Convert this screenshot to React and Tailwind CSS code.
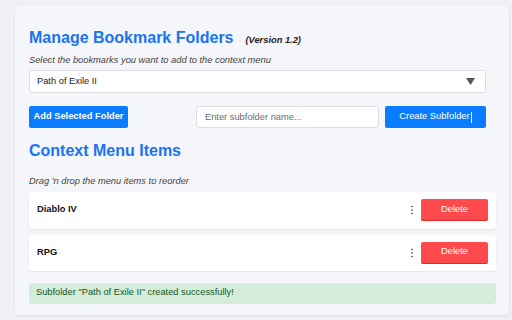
import React, { useState } from 'react'

function Kebab() {
  return (
    <svg width="2" height="10" viewBox="0 0 2 10" className="text-[#333]">
      <circle cx="1" cy="1.5" r="0.8" fill="currentColor" />
      <circle cx="1" cy="5" r="0.8" fill="currentColor" />
      <circle cx="1" cy="8.5" r="0.8" fill="currentColor" />
    </svg>
  )
}

function MenuItem({ name }) {
  return (
    <div className="flex h-[36.5px] items-center rounded-[3px] bg-white pl-[8px] pr-[8px] shadow-[0_1px_2px_rgba(0,0,0,0.08)]">
      <span className="flex-1 text-[9.3px] font-bold text-[#111]">{name}</span>
      <Kebab />
      <button className="ml-[8px] h-[22px] w-[67px] rounded-[2px] border-b border-[#e02a2a] bg-[#ff4a4d] text-[9.3px] text-white">
        Delete
      </button>
    </div>
  )
}

export default function App() {
  const [folder, setFolder] = useState('Path of Exile II')
  const [subfolder, setSubfolder] = useState('')
  const items = ['Diablo IV', 'RPG']

  return (
    <div
      className="h-[320px] w-[512px] overflow-hidden bg-[#eef0f4] pt-[5px] pl-[15px]"
      style={{ fontFamily: '"Liberation Sans", Arial, sans-serif' }}
    >
      <div className="h-[310px] w-[494px] rounded-[5px] bg-[#f5f6fa] pt-[25px] pl-[14px] shadow-[0_1px_3px_rgba(0,0,0,0.08)]">
        <div className="flex h-[16px] items-baseline">
          <h1 className="text-[16px] leading-[16px] font-bold text-[#1a73f0]">Manage Bookmark Folders</h1>
          <span className="ml-[12px] text-[9.3px] leading-[10px] font-bold italic text-[#222]">(Version 1.2)</span>
        </div>
        <p className="mt-[8px] text-[9.3px] leading-[12px] italic text-[#444]">
          Select the bookmarks you want to add to the context menu
        </p>

        <div className="relative mt-[4px] w-[457px]">
          <select
            value={folder}
            onChange={(e) => setFolder(e.target.value)}
            className="block h-[23px] w-full appearance-none rounded-[3px] border border-[#dcdde2] bg-white pl-[7px] text-[9.3px] text-[#222] outline-none"
          >
            <option>Path of Exile II</option>
            <option>Diablo IV</option>
            <option>RPG</option>
          </select>
          <svg
            width="9"
            height="7"
            viewBox="0 0 9 7"
            className="pointer-events-none absolute top-[8px] right-[11px]"
          >
            <polygon points="0,0 9,0 4.5,7" fill="#555" />
          </svg>
        </div>

        <div className="mt-[13px] flex w-[457px] items-center">
          <button className="h-[22px] w-[99px] rounded-[2px] bg-[#0a7cff] text-[9.3px] font-bold text-white">
            Add Selected Folder
          </button>
          <input
            type="text"
            value={subfolder}
            onChange={(e) => setSubfolder(e.target.value)}
            placeholder="Enter subfolder name..."
            className="ml-[68px] h-[22px] w-[183px] rounded-[3px] border border-[#dcdde2] bg-white pl-[8px] text-[9.3px] text-[#222] outline-none placeholder:text-[#6b6b6b]"
          />
          <button className="ml-[6px] flex h-[22px] flex-1 items-center justify-center rounded-[2px] bg-[#0a7cff] text-[9.3px] text-white">
            Create Subfolder
            <span className="ml-[1px] inline-block h-[11px] w-px bg-white" />
          </button>
        </div>

        <h2 className="mt-[14.5px] text-[16px] leading-[16px] font-bold text-[#1a73f0]">Context Menu Items</h2>
        <p className="mt-[16px] text-[9.3px] leading-[12px] italic text-[#444]">
          Drag 'n drop the menu items to reorder
        </p>

        <div className="mt-[5.5px] flex w-[467px] flex-col gap-[6px]">
          {items.map((item) => (
            <MenuItem key={item} name={item} />
          ))}
        </div>

        <div className="mt-[12px] flex h-[20.5px] w-[467px] items-center rounded-[3px] bg-[#d4edda] pl-[7px] text-[9.3px] text-[#155724]">
          Subfolder "Path of Exile II" created successfully!
        </div>
      </div>
    </div>
  )
}
